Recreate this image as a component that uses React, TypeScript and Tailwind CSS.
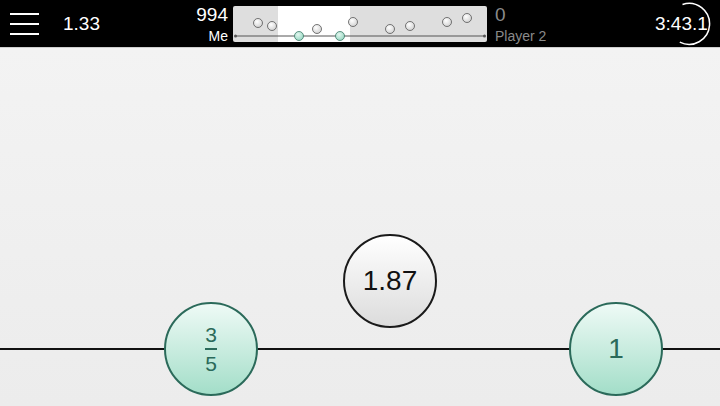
import React from 'react';

const font = { fontFamily: '"Liberation Sans", Arial, sans-serif' };

// grey marble positions on the mini track (x, y within the 254x36 map)
const greyDots: [number, number][] = [
  [25, 17], [39, 20], [84, 23], [120, 16], [157, 23], [177, 20], [214, 16], [234, 12],
];
const greenDots: [number, number][] = [[66, 30], [107, 30]];

const Hamburger: React.FC = () => (
  <div className="flex flex-col justify-between w-[29px] h-[22px]">
    <div className="h-[2px] bg-white" />
    <div className="h-[2px] bg-white" />
    <div className="h-[2px] bg-white" />
  </div>
);

const MiniMap: React.FC = () => (
  <div className="relative w-[254px] h-[36px] rounded-[2px] bg-[#dedede] overflow-hidden">
    <svg width="254" height="36" viewBox="0 0 254 36" className="block">
      <defs>
        <radialGradient id="gd" cx="40%" cy="35%" r="70%">
          <stop offset="0%" stopColor="#ffffff" />
          <stop offset="100%" stopColor="#cfcfcf" />
        </radialGradient>
        <radialGradient id="gg" cx="40%" cy="35%" r="70%">
          <stop offset="0%" stopColor="#e4f7f0" />
          <stop offset="100%" stopColor="#94d6c0" />
        </radialGradient>
      </defs>
      <rect x="45" y="0" width="72" height="36" fill="#ffffff" />
      <line x1="2" y1="30" x2="252" y2="30" stroke="#555" strokeWidth="1" />
      <circle cx="2.5" cy="30" r="1.5" fill="#555" />
      <circle cx="251.5" cy="30" r="1.5" fill="#555" />
      {greyDots.map(([x, y], i) => (
        <circle key={i} cx={x} cy={y} r="4.5" fill="url(#gd)" stroke="#555" strokeWidth="0.8" />
      ))}
      {greenDots.map(([x, y], i) => (
        <circle key={i} cx={x} cy={y} r="4.5" fill="url(#gg)" stroke="#3d7a68" strokeWidth="0.8" />
      ))}
    </svg>
  </div>
);

const Timer: React.FC = () => (
  <div className="relative w-[70px] h-[48px] flex items-center">
    <span className="text-white text-[19px] leading-none ml-[5px]">3:43.1</span>
    <svg className="absolute left-0 top-0" width="70" height="48" viewBox="0 0 70 48">
      <path d="M 32.5 4.5 A 20.5 20.5 0 1 1 29.8 42.2" fill="none" stroke="#fff" strokeWidth="1.5" />
    </svg>
  </div>
);

const Header: React.FC = () => (
  <div className="h-[48px] bg-black flex items-center shrink-0 border-b border-[#cfcfcf]">
    <div className="w-[228px] flex items-center">
      <div className="pl-[10px]"><Hamburger /></div>
      <span className="ml-[24px] text-white text-[19px] leading-none">1.33</span>
      <div className="flex-1 flex flex-col items-end">
        <span className="text-white text-[19px] leading-none mt-[1px]">994</span>
        <span className="text-white text-[14px] leading-none mt-[5px]">Me</span>
      </div>
    </div>
    <div className="ml-[5px]"><MiniMap /></div>
    <div className="ml-[8px] flex flex-col">
      <span className="text-[#8a8a8a] text-[19px] leading-none mt-[1px]">0</span>
      <span className="text-[#8a8a8a] text-[14px] leading-none mt-[5px]">Player 2</span>
    </div>
    <div className="flex-1" />
    <div className="mr-[0px]"><Timer /></div>
  </div>
);

const Ball: React.FC<{ x: number; y: number; green?: boolean; children: React.ReactNode }> = ({
  x,
  y,
  green,
  children,
}) => (
  <div
    className={
      green
        ? 'absolute w-[94px] h-[94px] rounded-full border-2 border-[#2b6a5a] bg-gradient-to-b from-[#eefaf6] to-[#a3dec9] flex items-center justify-center text-[#2b6a5a]'
        : 'absolute w-[94px] h-[94px] rounded-full border-2 border-[#1a1a1a] bg-gradient-to-b from-[#ffffff] to-[#dcdcdc] flex items-center justify-center text-[#111]'
    }
    style={{ left: x - 47, top: y - 47 }}
  >
    {children}
  </div>
);

export default function App() {
  return (
    <div className="w-[720px] h-[406px] flex flex-col overflow-hidden bg-[#eeeeee]" style={font}>
      <Header />
      <div className="relative flex-1 bg-gradient-to-b from-[#f3f3f3] to-[#ececec]">
        {/* track line */}
        <div className="absolute left-0 right-0 top-[300px] h-[2px] bg-[#111]" />
        <Ball x={211} y={301} green>
          <div className="flex flex-col items-center">
            <span className="text-[21px] leading-none">3</span>
            <div className="w-[12px] h-[2px] bg-[#2b6a5a] my-[3px]" />
            <span className="text-[21px] leading-none">5</span>
          </div>
        </Ball>
        <Ball x={390} y={233}>
          <span className="text-[28px] leading-none">1.87</span>
        </Ball>
        <Ball x={616} y={301} green>
          <span className="text-[28px] leading-none">1</span>
        </Ball>
      </div>
    </div>
  );
}
